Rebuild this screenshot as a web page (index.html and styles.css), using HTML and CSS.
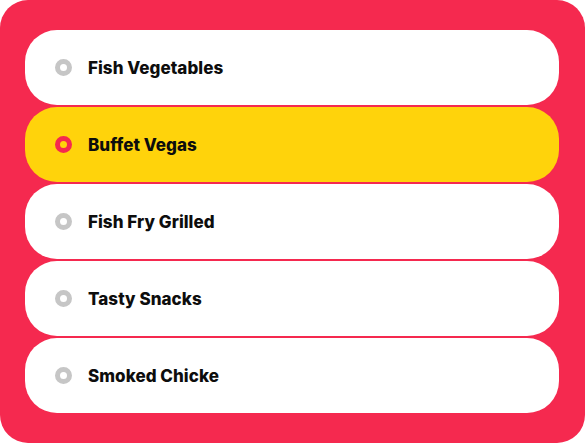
FILE: index.html
```html
<!DOCTYPE html>
<html>
<head>
<meta charset="utf-8">
<link rel="stylesheet" href="styles.css">
</head>
<body>
<div class="panel">
  <div class="option"><span class="radio"></span><span class="label">Fish Vegetables</span></div>
  <div class="option selected"><span class="radio"></span><span class="label">Buffet Vegas</span></div>
  <div class="option"><span class="radio"></span><span class="label">Fish Fry Grilled</span></div>
  <div class="option"><span class="radio"></span><span class="label">Tasty Snacks</span></div>
  <div class="option"><span class="radio"></span><span class="label">Smoked Chicke</span></div>
</div>
</body>
</html>
```
FILE: styles.css
```css
html, body { margin: 0; padding: 0; background: #ffffff; }
body { width: 585px; height: 444px; overflow: hidden; }
.panel {
  box-sizing: border-box;
  width: 585px;
  height: 443px;
  background: #f5294f;
  border-radius: 28px;
  padding: 30px 26px 30px 25px;
  display: flex;
  flex-direction: column;
  gap: 2px;
}
.option {
  height: 75px;
  flex: none;
  background: #ffffff;
  border-radius: 32px;
  display: flex;
  align-items: center;
  padding-left: 30px;
}
.option.selected { background: #ffd30b; }
.radio {
  box-sizing: border-box;
  width: 17px;
  height: 17px;
  border-radius: 50%;
  border: 5.5px solid #c6c6c6;
  flex: none;
  margin-left: -0.5px;
}
.selected .radio { border-color: #f5294f; background: #ffd30b; }
.label {
  margin-left: 16.5px;
  font-family: Inter, "Noto Sans", sans-serif;
  font-weight: 800;
  font-size: 17px;
  color: #0d0d0d;
  letter-spacing: 0.05px;
}
```
